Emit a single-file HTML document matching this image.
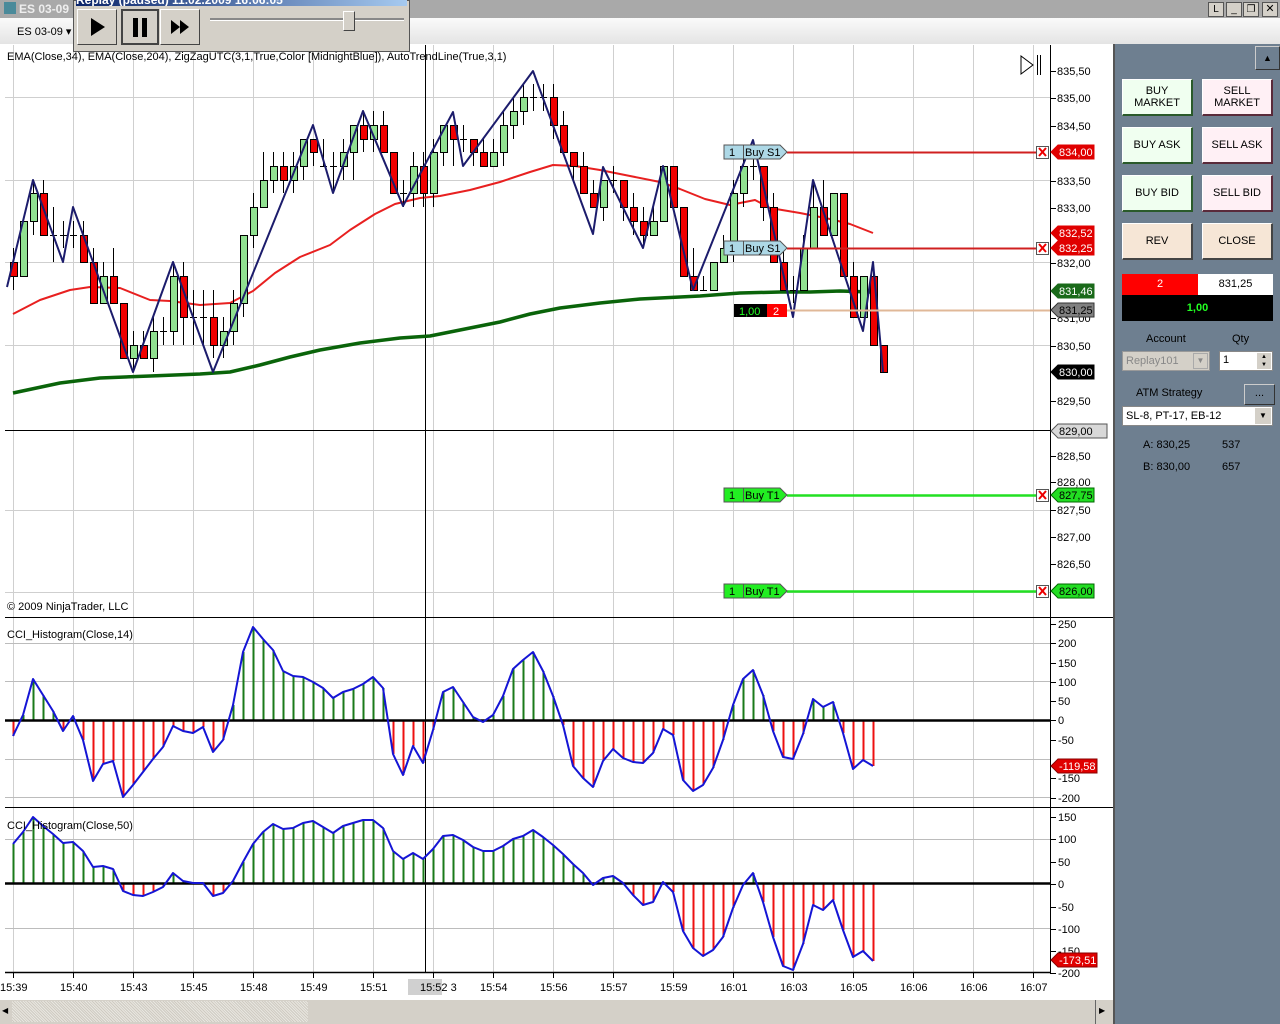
<!DOCTYPE html>
<html><head><meta charset="utf-8">
<style>
body{margin:0;width:1280px;height:1024px;overflow:hidden;background:#fff;font-family:"Liberation Sans",sans-serif;font-size:11px;position:relative}
.abs{position:absolute}
.btn{position:absolute;width:71px;height:37px;border:1px solid #fff;border-right:2px solid #444;border-bottom:2px solid #444;box-sizing:border-box;display:flex;align-items:center;justify-content:center;text-align:center;font-size:11px;line-height:12px;color:#000}
.b{background:#f0fff0;border-right-color:#2a5a2a;border-bottom-color:#2a5a2a}
.s{background:#fff0f5;border-right-color:#5a2a3a;border-bottom-color:#5a2a3a}
.r{background:#f6e6d6}
.rb{position:absolute;top:9px;width:40px;height:36px;border:1px solid #fff;border-right-color:#444;border-bottom-color:#444;box-sizing:border-box}
</style></head><body>
<div class="abs" style="left:0;top:0;width:1280px;height:18px;background:#a9a9a9"></div>
<div class="abs" style="left:4px;top:2px;width:12px;height:12px;background:#4a8a9a"></div>
<div class="abs" style="left:19px;top:2px;color:#eee;font-weight:bold;font-size:12px">ES 03-09</div>
<div class="abs" style="left:1208px;top:2px;width:14px;height:13px;background:#d4d0c8;border:1px solid #555;font-size:10px;text-align:center;line-height:13px">L</div>
<div class="abs" style="left:1226px;top:2px;width:14px;height:13px;background:#d4d0c8;border:1px solid #555;font-size:10px;text-align:center;line-height:13px">_</div>
<div class="abs" style="left:1243px;top:2px;width:14px;height:13px;background:#d4d0c8;border:1px solid #555;font-size:10px;text-align:center;line-height:13px">❐</div>
<div class="abs" style="left:1262px;top:2px;width:14px;height:13px;background:#d4d0c8;border:1px solid #555;font-size:11px;text-align:center;line-height:13px">✕</div>
<div class="abs" style="left:0;top:18px;width:1280px;height:26px;background:linear-gradient(#fafafa,#e4e4e4);border-bottom:1px solid #bbb"></div>
<div class="abs" style="left:17px;top:25px;font-size:11px">ES 03-09 ▾</div>
<div class="abs" style="left:1113px;top:44px;width:167px;height:980px;background:#6e7f90;border-left:2px solid #555"></div>
<div class="abs" style="left:1255px;top:46px;width:23px;height:22px;background:#6e7f90;border:1px solid #ccc;border-right-color:#333;border-bottom-color:#333;color:#000;text-align:center;line-height:22px;font-size:9px">▲</div>
<div class="btn b" style="left:1122px;top:79px">BUY<br>MARKET</div>
<div class="btn s" style="left:1202px;top:79px">SELL<br>MARKET</div>
<div class="btn b" style="left:1122px;top:127px">BUY ASK</div>
<div class="btn s" style="left:1202px;top:127px">SELL ASK</div>
<div class="btn b" style="left:1122px;top:175px">BUY BID</div>
<div class="btn s" style="left:1202px;top:175px">SELL BID</div>
<div class="btn r" style="left:1122px;top:223px">REV</div>
<div class="btn r" style="left:1202px;top:223px">CLOSE</div>
<div class="abs" style="left:1122px;top:274px;width:76px;height:21px;background:#f00;color:#fff;text-align:center;line-height:21px">2</div>
<div class="abs" style="left:1198px;top:274px;width:75px;height:21px;background:#fff;text-align:center;line-height:21px">831,25</div>
<div class="abs" style="left:1122px;top:295px;width:151px;height:26px;background:#000;color:#2f2;font-weight:bold;text-align:center;line-height:26px">1,00</div>
<div class="abs" style="left:1146px;top:333px">Account</div>
<div class="abs" style="left:1232px;top:333px">Qty</div>
<div class="abs" style="left:1122px;top:351px;width:88px;height:20px;background:#d4d0c8;border:1px solid #999;box-sizing:border-box;color:#888;padding:3px 3px;font-size:11px">Replay101</div>
<div class="abs" style="left:1193px;top:353px;width:15px;height:16px;background:#d4d0c8;border:1px solid #aaa;box-sizing:border-box;font-size:8px;text-align:center;color:#888;line-height:14px">▼</div>
<div class="abs" style="left:1219px;top:351px;width:54px;height:20px;background:#fff;border:1px solid #888;box-sizing:border-box;padding:2px 3px">1</div>
<div class="abs" style="left:1257px;top:353px;width:14px;height:16px;background:#d4d0c8;font-size:6px;text-align:center;line-height:8px">▲<br>▼</div>
<div class="abs" style="left:1136px;top:387px">ATM Strategy</div>
<div class="abs" style="left:1244px;top:384px;width:29px;height:19px;background:#6e7f90;border:1px solid #ccc;border-right-color:#333;border-bottom-color:#333;text-align:center;line-height:16px">...</div>
<div class="abs" style="left:1122px;top:406px;width:151px;height:20px;background:#fff;border:1px solid #888;box-sizing:border-box;padding:3px 3px">SL-8, PT-17, EB-12</div>
<div class="abs" style="left:1255px;top:408px;width:16px;height:16px;background:#d4d0c8;font-size:8px;text-align:center;line-height:16px">▼</div>
<div class="abs" style="left:1143px;top:439px">A: 830,25</div><div class="abs" style="left:1222px;top:439px">537</div>
<div class="abs" style="left:1143px;top:461px">B: 830,00</div><div class="abs" style="left:1222px;top:461px">657</div>
<div class="abs" style="left:0;top:1000px;width:1113px;height:24px;background:#d4d0c8"></div>
<div class="abs" style="left:12px;top:1001px;width:296px;height:21px;background:repeating-linear-gradient(45deg,#e8e6e0 0 1px,#cfcbc2 1px 2px)"></div>
<div class="abs" style="left:2px;top:1006px;font-size:8px">◀</div>
<div class="abs" style="left:1099px;top:1006px;font-size:8px">▶</div>
<div class="abs" style="left:1095px;top:1000px;width:1px;height:24px;background:#666"></div>
<svg class="abs" style="left:0;top:0" width="1113" height="1000" id="c" xmlns="http://www.w3.org/2000/svg" font-family="Liberation Sans, sans-serif" font-size="11"></svg>
<div class="abs" style="left:73px;top:0;width:337px;height:52px;background:#d4d0c8;border:1px solid #555;box-sizing:border-box"></div>
<div class="abs" style="left:76px;top:0;width:331px;height:6px;background:linear-gradient(90deg,#0a246a,#a6caf0);overflow:hidden;color:#fff;font-weight:bold;font-size:12px;line-height:0px">Replay (paused) 11.02.2009 16:06:05</div>
<div class="rb" style="left:77px"><svg width="38" height="34"><path d="M13 8L27 17L13 26Z" fill="#000"/></svg></div>
<div class="rb" style="left:121px;width:38px;border:2px solid #444"><svg width="34" height="32"><rect x="10" y="7" width="5" height="19" fill="#000"/><rect x="19" y="7" width="5" height="19" fill="#000"/></svg></div>
<div class="rb" style="left:160px"><svg width="38" height="34"><path d="M10 10L19 17L10 24Z M19 10L28 17L19 24Z" fill="#000"/></svg></div>
<div class="abs" style="left:210px;top:18px;width:194px;height:2px;background:#888;border-bottom:1px solid #fff"></div>
<div class="abs" style="left:343px;top:11px;width:10px;height:18px;background:#d4d0c8;border:1px solid #fff;border-right-color:#444;border-bottom-color:#444"></div>
<script>
const s=document.getElementById('c');let h='';
const L=(x1,y1,x2,y2,c,w)=>h+=`<line x1="${x1}" y1="${y1}" x2="${x2}" y2="${y2}" stroke="${c}" stroke-width="${w||1}"/>`;
const T=(x,y,t,c,a)=>h+=`<text x="${x}" y="${y}" fill="${c||'#000'}" ${a||''}>${t}</text>`;
const P=(pts,c,w)=>h+=`<polyline points="${pts.map(p=>p.join(',')).join(' ')}" fill="none" stroke="${c}" stroke-width="${w}" stroke-linejoin="round"/>`;
h+='<rect x="0" y="44" width="1113" height="956" fill="#fff"/>';
for(let x=13;x<=1033;x+=60)L(x+.5,45,x+.5,973,'#cfcfcf');
[97,180,262,345,510,592].forEach(y=>L(5,y+.5,1050,y+.5,'#cfcfcf'));
[643,681,759,797].forEach(y=>L(5,y+.5,1050,y+.5,'#bcbcbc'));
[839,928].forEach(y=>L(5,y+.5,1050,y+.5,'#bcbcbc'));
L(5,617.5,1113,617.5,'#000');L(5,807.5,1113,807.5,'#000');L(5,972.5,1050,972.5,'#000',1.5);
L(1050.5,45,1050.5,973,'#000');
L(5,430.5,1050,430.5,'#000');
L(425.5,45,425.5,973,'#000');
P([[13,314],[40,300],[70,290],[90,287],[120,288],[150,300],[170,301],[200,305],[230,303],[253,291],[275,273],[300,257],[330,245],[350,230],[375,214],[395,204],[420,198],[440,196],[470,190],[500,182],[530,172],[553,165],[575,166],[600,170],[630,176],[660,182],[680,189],[705,199],[730,205],[755,200],[770,208],[800,213],[830,219],[850,224],[873,233]],'#e82020',2);
P([[13,393],[60,383],[100,378],[150,376],[200,374],[230,372],[260,365],[290,357],[320,350],[360,343],[400,338],[430,336],[460,330],[500,322],[530,314],[560,308],[600,303],[640,299],[700,296],[740,293],[780,292],[810,292],[840,291],[870,292]],'#0a640a',3.5);
const C=[[262,276,248,290,'r'],[221,276,221,276,'g'],[193,221,180,235,'g'],[193,235,180,235,'r'],[235,235,207,262,'d'],[235,235,221,248,'d'],[235,235,221,248,'d'],[235,262,221,262,'r'],[262,303,248,303,'r'],[276,303,262,303,'g'],[276,303,248,303,'r'],[303,358,303,358,'r'],[345,358,331,372,'g'],[345,358,331,358,'r'],[331,358,317,372,'g'],[331,331,317,345,'d'],[276,331,262,345,'g'],[276,317,262,345,'r'],[317,317,290,345,'d'],[317,317,290,345,'d'],[317,345,290,358,'r'],[331,345,317,358,'g'],[303,331,290,345,'g'],[235,303,235,317,'g'],[207,235,193,248,'g'],[180,207,152,193,'g'],[166,180,152,193,'g'],[166,180,152,193,'r'],[166,180,152,193,'g'],[139,166,139,180,'g'],[139,152,139,166,'r'],[166,166,139,166,'d'],[166,166,152,193,'d'],[152,166,139,180,'g'],[125,152,125,180,'g'],[125,139,111,152,'r'],[125,139,111,152,'g'],[125,152,111,152,'r'],[152,193,152,193,'r'],[193,193,180,207,'d'],[166,193,152,207,'g'],[166,193,152,207,'r'],[152,193,139,207,'g'],[125,152,125,166,'g'],[125,139,125,166,'r'],[139,139,125,152,'d'],[139,152,139,166,'r'],[152,166,139,166,'r'],[152,166,139,166,'g'],[125,152,111,166,'g'],[111,125,97,139,'g'],[97,111,84,125,'g'],[97,97,84,111,'d'],[97,97,84,111,'d'],[97,125,84,139,'r'],[125,152,111,152,'r'],[152,166,152,180,'r'],[166,193,152,193,'r'],[193,207,180,207,'r'],[180,207,180,221,'g'],[180,180,166,193,'d'],[180,207,180,221,'r'],[207,221,193,235,'r'],[221,235,207,248,'r'],[221,235,207,235,'g'],[166,221,166,221,'g'],[166,207,166,207,'r'],[207,276,207,276,'r'],[276,290,248,290,'r'],[290,290,276,290,'d'],[262,290,262,290,'g'],[248,262,235,262,'g'],[193,248,180,262,'g'],[166,193,152,207,'g'],[166,166,152,180,'d'],[166,207,166,221,'r'],[207,262,193,262,'r'],[262,290,248,290,'r'],[290,290,276,303,'d'],[248,290,235,290,'g'],[207,248,180,248,'g'],[207,235,180,235,'r'],[193,235,193,235,'g'],[193,276,193,276,'r'],[276,317,262,317,'r'],[276,317,276,317,'g'],[276,345,262,345,'r'],[345,372,345,372,'r']];
C.forEach((c,i)=>{const x=13+i*10;L(x+.5,c[2],x+.5,c[3],'#000');
if(c[4]=='d')L(x-3,c[0]+.5,x+4,c[0]+.5,'#000');
else h+=`<rect x="${x-3}.5" y="${c[0]}.5" width="7" height="${c[1]-c[0]}" fill="${c[4]=='g'?'#90e090':'#f00000'}" stroke="#000"/>`;});
P([[7,287],[33,180],[63,262],[73,207],[133,372],[173,262],[213,372],[313,125],[333,193],[363,111],[403,206],[453,112],[463,166],[533,71],[593,234],[603,167],[643,248],[663,166],[693,290],[753,140],[793,317],[813,180],[863,331],[873,262],[883,372]],'#1c1c6c',2);
L(787,152.5,1037,152.5,'#d02020',2);L(787,248.5,1037,248.5,'#d02020',2);
L(787,495.5,1037,495.5,'#22e022',2.5);L(787,591.5,1037,591.5,'#22e022',2.5);
L(765,310.5,1050,310.5,'#e0b898',2);
const tag=(y,c,t)=>{h+=`<path d="M724 ${y-7}H780L787 ${y}L780 ${y+7}H724Z" fill="${c}" stroke="#555"/>`;L(743.5,y-7,743.5,y+7,'#555');T(729,y+4,'1');T(745,y+4,t);};
tag(152,'#add8e6','Buy S1');tag(248,'#add8e6','Buy S1');tag(495,'#22ee22','Buy T1');tag(591,'#22ee22','Buy T1');
h+='<rect x="734" y="304" width="33" height="13" fill="#000"/><rect x="767" y="304" width="20" height="13" fill="#f00"/>';
T(739,315,'1,00','#2f2');T(773,315,'2','#fff');
[152,248,495,591].forEach(y=>{h+=`<rect x="1036.5" y="${y-6}.5" width="12" height="12" fill="#fff" stroke="#555"/>`;L(1039,y-4,1046,y+4,'#e00',2);L(1046,y-4,1039,y+4,'#e00',2);});
const lab=[[71,'835,50'],[98,'835,00'],[126,'834,50'],[181,'833,50'],[208,'833,00'],[263,'832,00'],[318,'831,00'],[346,'830,50'],[401,'829,50'],[456,'828,50'],[482,'828,00'],[510,'827,50'],[537,'827,00'],[564,'826,50']];
lab.forEach(l=>{L(1050,l[0]+.5,1056,l[0]+.5,'#000');T(1057,l[0]+4,l[1]);});
const box=(y,bg,fg,t,w,st)=>{w=w||43;h+=`<path d="M1051 ${y}L1058 ${y-7}H${1051+w}V${y+7}H1058Z" fill="${bg}" stroke="${st||bg}"/>`;T(1059,y+4,t,fg);};
box(152,'#e00000','#fff','834,00');box(233,'#e00000','#fff','832,52');box(248,'#e00000','#fff','832,25');
box(291,'#1a6a1a','#fff','831,46');box(310,'#808080','#000','831,25',43,'#333');box(372,'#000','#fff','830,00');
box(431,'#d8d8d8','#000','829,00',56,'#555');box(495,'#22dd22','#000','827,75',43,'#060');box(591,'#22dd22','#000','826,00',43,'#060');
[[624,'250'],[643,'200'],[663,'150'],[682,'100'],[701,'50'],[720,'0'],[740,'-50'],[778,'-150'],[798,'-200']].forEach(l=>{L(1050,l[0]+.5,1056,l[0]+.5,'#000');T(1058,l[0]+4,l[1]);});
[[817,'150'],[839,'100'],[862,'50'],[884,'0'],[907,'-50'],[929,'-100'],[951,'-150'],[973,'-200']].forEach(l=>{L(1050,l[0]+.5,1056,l[0]+.5,'#000');T(1058,l[0]+4,l[1]);});
box(766,'#e00000','#fff','-119,58',46,'#800');box(960,'#e00000','#fff','-173,51',46,'#800');
const c1=[736,715,679,695,711,731,716,740,781,764,761,797,785,772,759,747,726,731,733,727,752,740,705,652,627,639,650,671,676,677,682,688,698,692,689,684,677,688,754,775,746,763,730,692,687,702,717,722,715,696,669,660,652,671,696,725,766,778,787,761,749,758,762,763,753,729,735,780,791,785,768,740,705,679,670,695,731,757,759,734,699,707,702,733,769,760,766];
const c2=[844,832,817,826,834,843,842,851,867,866,869,891,895,896,892,887,873,881,883,883,896,893,881,862,844,832,824,829,828,823,821,827,833,826,823,820,820,828,851,859,853,859,849,836,835,840,847,851,851,846,839,836,830,837,845,854,864,873,885,878,876,883,895,905,902,882,892,931,948,956,950,937,908,885,873,902,937,966,970,944,905,910,900,930,957,951,961];
const hist=(d,z)=>{d.forEach((y,i)=>{const x=13+i*10;if(Math.abs(y-z)>1)L(x+.5,z,x+.5,y,y<z?'#1a7a1a':'#ee1010',2);});L(5,z+.5,1050,z+.5,'#000',2.5);P(d.map((y,i)=>[13+i*10,y]),'#1515d5',2);};
hist(c1,720);hist(c2,883);
T(7,60,'EMA(Close,34), EMA(Close,204), ZigZagUTC(3,1,True,Color [MidnightBlue]), AutoTrendLine(True,3,1)');
T(7,610,'© 2009 NinjaTrader, LLC');T(7,638,'CCI_Histogram(Close,14)');T(7,829,'CCI_Histogram(Close,50)');
h+='<path d="M1021 56V74L1033 65Z" fill="none" stroke="#000"/>';L(1037.5,55,1037.5,75,'#000');L(1040.5,55,1040.5,75,'#000');
h+='<rect x="408" y="979" width="34" height="16" fill="#d0d0d0"/>';
const tl=['15:39','15:40','15:43','15:45','15:48','15:49','15:51','15:52 3','15:54','15:56','15:57','15:59','16:01','16:03','16:05','16:06','16:06','16:07'];
tl.forEach((t,i)=>{const x=13+i*60;L(x+.5,973,x+.5,978,'#000');T(i==0?0:x-13,991,t);});
s.innerHTML=h;
</script>
</body></html>
